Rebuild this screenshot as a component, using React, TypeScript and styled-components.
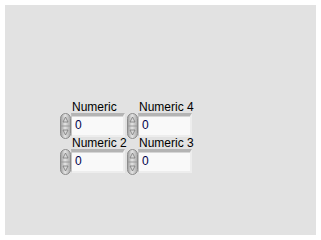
import React from "react";
import styled, { createGlobalStyle } from "styled-components";

const GlobalStyle = createGlobalStyle`
    html, body {
        margin: 0;
        padding: 0;
        background: #ffffff;
    }
    body {
        font-family: "Liberation Sans", Arial, sans-serif;
    }
`;

const CONTROLS = [
    { label: "Numeric", value: 0 },
    { label: "Numeric 4", value: 0 },
    { label: "Numeric 2", value: 0 },
    { label: "Numeric 3", value: 0 },
];

const Spinner: React.FC = () => (
    <SpinnerSvg width="11" height="26" viewBox="0 0 11 26">
        <defs>
            <linearGradient id="spinGrad" x1="0" x2="1" y1="0" y2="0">
                <stop offset="0" stopColor="#9c9c9c" />
                <stop offset="0.45" stopColor="#e4e4e4" />
                <stop offset="1" stopColor="#a8a8a8" />
            </linearGradient>
        </defs>
        <rect x="0.5" y="0.5" width="10" height="25" rx="5" fill="url(#spinGrad)" stroke="#8c8c8c" />
        <line x1="1" y1="13" x2="10" y2="13" stroke="#9a9a9a" />
        <path d="M5.5 4 L8 9 L3 9 Z" fill="#d8d8d8" stroke="#7a7a7a" strokeWidth="0.8" />
        <path d="M5.5 22 L8 17 L3 17 Z" fill="#d8d8d8" stroke="#7a7a7a" strokeWidth="0.8" />
    </SpinnerSvg>
);

const App: React.FC = () => {
    return (
        <>
            <GlobalStyle />
            <Panel>
                <ControlGrid>
                    {CONTROLS.map((control, index) => (
                        <Control key={index}>
                            <Label>{control.label}</Label>
                            <Field>
                                <Spinner />
                                <ValueBox>{control.value}</ValueBox>
                            </Field>
                        </Control>
                    ))}
                </ControlGrid>
            </Panel>
        </>
    );
};

const Panel = styled.div`
    margin: 5px;
    width: 311px;
    height: 230px;
    box-sizing: border-box;
    background-color: #e2e2e2;
    padding: 96px 0 0 55px;
`;

const ControlGrid = styled.div`
    display: grid;
    grid-template-columns: 65px 65px;
    column-gap: 2px;
    grid-auto-rows: 36px;
`;

const Control = styled.div`
    display: flex;
    flex-direction: column;
`;

const Label = styled.div`
    height: 12px;
    line-height: 12px;
    font-size: 12px;
    color: #000000;
    padding-left: 12px;
    white-space: nowrap;
`;

const Field = styled.div`
    display: flex;
    align-items: flex-start;
    height: 24px;
`;

const SpinnerSvg = styled.svg`
    display: block;
    flex: none;
`;

const ValueBox = styled.div`
    width: 54px;
    height: 24px;
    box-sizing: border-box;
    background-color: #f9f9f9;
    border-top: 3px solid #b4b4b4;
    border-left: 1px solid #c4c4c4;
    border-right: 2px solid #ededed;
    border-bottom: 2px solid #ededed;
    box-shadow: inset 0 1px 0 #d6d6d6;
    padding-left: 3px;
    font-size: 12px;
    line-height: 18px;
    color: #00004a;
`;

export default App;
